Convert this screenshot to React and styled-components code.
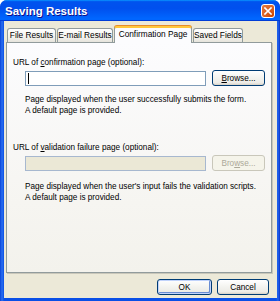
import React from 'react'
import styled, { createGlobalStyle } from 'styled-components'

const Global = createGlobalStyle`
  body {
    margin: 0;
    background: #fff;
    font-family: "Liberation Sans", Tahoma, Arial, sans-serif;
  }
`

const Window = styled.div`
  width: 280px;
  height: 301px;
  display: flex;
  flex-direction: column;
  background: linear-gradient(90deg, #0842d8 0, #2a6ff0 2px, #0a4fe6 4px, #0a4fe6 276px, #2464ec 278px, #0833c8 280px);
  border-radius: 7px 7px 0 0;
  overflow: hidden;
`

const TitleBar = styled.div`
  height: 21px;
  flex-shrink: 0;
  display: flex;
  align-items: center;
  justify-content: space-between;
  padding: 0 5px 0 5px;
  background: linear-gradient(180deg, #0997ff 0, #0053ee 8%, #0050ee 40%, #0066ff 88%, #0066ff 93%, #005bff 95%, #003dd7 96%, #003dd7 100%);
`

const Title = styled.span`
  color: #fff;
  font-weight: bold;
  font-size: 11.5px;
  text-shadow: 1px 1px #0f1089;
`

const CloseButton = styled.div`
  width: 14px;
  height: 14px;
  box-sizing: border-box;
  border: 1px solid #fff;
  border-radius: 3px;
  background: radial-gradient(circle at 90% 90%, #cc4600 0%, #dc6527 55%, #e5793f 100%);
  display: flex;
  align-items: center;
  justify-content: center;
`

const Body = styled.div`
  flex: 1;
  margin: 0 3px 3px 4px;
  background: #ece9d8;
  display: flex;
  flex-direction: column;
  padding: 3px 5px 0 2px;
`

const TabBar = styled.div`
  display: flex;
  align-items: flex-end;
  height: 18px;
  padding-left: 1px;
  position: relative;
  z-index: 1;
`

const Tab = styled.div`
  width: ${p => p.$w}px;
  height: ${p => (p.$active ? '17px' : '14px')};
  margin-bottom: ${p => (p.$active ? '-1px' : '0')};
  margin-right: 1px;
  box-sizing: border-box;
  border: 1px solid #919b9c;
  border-bottom: none;
  border-top: ${p => (p.$active ? '2px solid #ffc83c' : '1px solid #919b9c')};
  box-shadow: ${p => (p.$active ? '0 -1px #e68b2c' : 'none')};
  border-radius: 3px 3px 0 0;
  background: ${p => (p.$active ? '#fcfcfe' : 'linear-gradient(180deg, #fff 0%, #f4f3ee 60%, #e6e4dc 100%)')};
  font-size: 8.3px;
  line-height: 13px;
  text-align: center;
  color: #000;
  white-space: nowrap;
`

const Panel = styled.div`
  height: 231px;
  box-sizing: border-box;
  border: 1px solid #919b9c;
  background: linear-gradient(180deg, #fcfcfe 0%, #f6f5f1 70%, #f3f2ec 100%);
  box-shadow: 1px 1px #c9c7ba;
  padding: 14px 5px 0 6px;
  display: flex;
  flex-direction: column;
`

const Section = styled.div`
  display: flex;
  flex-direction: column;
  margin-bottom: ${p => p.$gap || 0}px;
`

const Label = styled.div`
  font-size: 8.2px;
  line-height: 11px;
  color: #000;
  u {
    text-decoration: underline;
    text-underline-offset: 1px;
  }
`

const FieldRow = styled.div`
  display: flex;
  align-items: center;
  margin: 2px 0 0 12px;
  gap: 6px;
`

const Input = styled.div`
  width: 181px;
  height: 15px;
  box-sizing: border-box;
  border: 1px solid ${p => (p.$disabled ? '#a7b8cf' : '#7f9db9')};
  background: ${p => (p.$disabled ? '#ebe8d6' : '#fff')};
  display: flex;
  align-items: center;
  padding-left: 2px;
`

const Caret = styled.span`
  width: 1px;
  height: 11px;
  background: #000;
`

const Button = styled.div`
  width: ${p => p.$w || 53}px;
  height: ${p => p.$h || 16}px;
  box-sizing: border-box;
  border: 1px solid ${p => (p.$disabled ? '#c9c7ba' : '#003c74')};
  border-radius: 3px;
  background: ${p => (p.$disabled ? '#f5f4ea' : 'linear-gradient(180deg, #fff 0%, #f3f3ef 50%, #ecebe6 85%, #d6d0c5 100%)')};
  box-shadow: ${p => (p.$default ? 'inset 0 0 0 1px #c1d3fb, inset -1px -1px 0 1px #698cd2' : 'none')};
  color: ${p => (p.$disabled ? '#aca899' : '#000')};
  font-size: 8.2px;
  display: flex;
  align-items: center;
  justify-content: center;
  u {
    text-decoration: underline;
    text-underline-offset: 1px;
  }
`

const Help = styled.div`
  margin: ${p => p.$top || 9}px 0 0 12px;
  font-size: 8.2px;
  line-height: 11px;
  color: #000;
  white-space: nowrap;
`

const Footer = styled.div`
  display: flex;
  justify-content: flex-end;
  gap: 5px;
  padding: 6px 3px 0 0;
`

export default function App() {
  return (
    <>
      <Global />
      <Window>
        <TitleBar>
          <Title>Saving Results</Title>
          <CloseButton>
            <svg width="8" height="8" viewBox="0 0 8 8">
              <path d="M1 1 L7 7 M7 1 L1 7" stroke="#fff" strokeWidth="1.6" strokeLinecap="square" />
            </svg>
          </CloseButton>
        </TitleBar>
        <Body>
          <TabBar>
            <Tab $w={49}>File Results</Tab>
            <Tab $w={56}>E-mail Results</Tab>
            <Tab $w={78} $active>Confirmation Page</Tab>
            <Tab $w={50}>Saved Fields</Tab>
          </TabBar>
          <Panel>
            <Section $gap={26}>
              <Label>URL of <u>c</u>onfirmation page (optional):</Label>
              <FieldRow>
                <Input><Caret /></Input>
                <Button><u>B</u>rowse...</Button>
              </FieldRow>
              <Help $top={8}>
                Page displayed when the user successfully submits the form.<br />
                A default page is provided.
              </Help>
            </Section>
            <Section>
              <Label>URL of <u>v</u>alidation failure page (optional):</Label>
              <FieldRow>
                <Input $disabled />
                <Button $disabled>Bro<u>w</u>se...</Button>
              </FieldRow>
              <Help $top={10}>
                Page displayed when the user's input fails the validation scripts.<br />
                A default page is provided.
              </Help>
            </Section>
          </Panel>
          <Footer>
            <Button $default $w={55}>OK</Button>
            <Button $w={52}>Cancel</Button>
          </Footer>
        </Body>
      </Window>
    </>
  )
}
